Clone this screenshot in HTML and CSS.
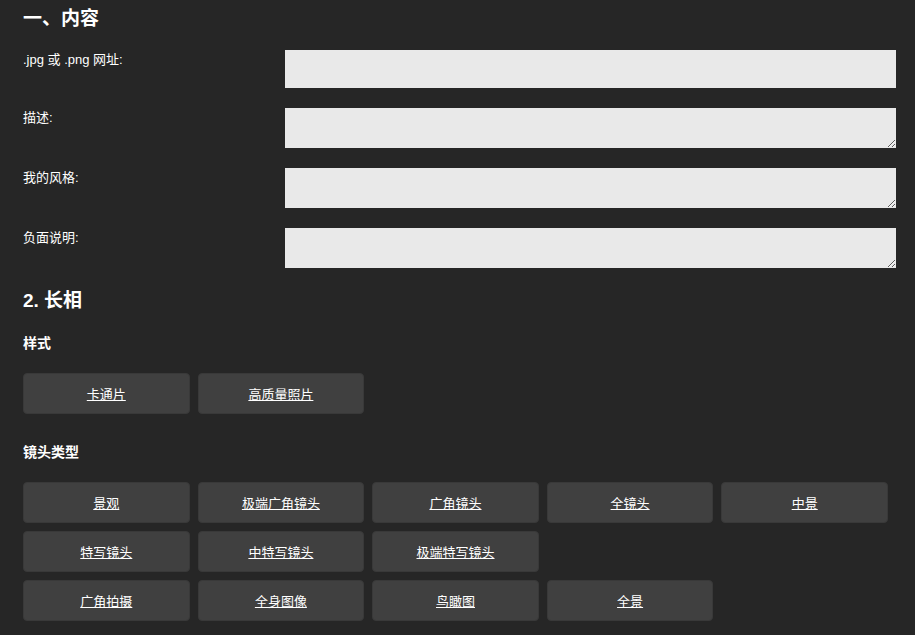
FILE: index.html
```html
<!DOCTYPE html>
<html lang="zh-CN">
<head>
<meta charset="utf-8">
<title>内容</title>
<link rel="stylesheet" href="styles.css">
</head>
<body>
<div class="page">
  <h2 class="section-title first">一、内容</h2>
  <div class="field">
    <label class="field-label">.jpg 或 .png 网址:</label>
    <input class="field-input" type="text">
  </div>
  <div class="field">
    <label class="field-label">描述:</label>
    <textarea class="field-area"></textarea>
  </div>
  <div class="field">
    <label class="field-label">我的风格:</label>
    <textarea class="field-area"></textarea>
  </div>
  <div class="field">
    <label class="field-label">负面说明:</label>
    <textarea class="field-area"></textarea>
  </div>

  <h2 class="section-title">2. 长相</h2>
  <h3 class="group-title">样式</h3>
  <div class="options">
    <div class="option-row">
      <a class="option" href="#">卡通片</a>
      <a class="option" href="#">高质量照片</a>
    </div>
  </div>
  <h3 class="group-title spaced">镜头类型</h3>
  <div class="options">
    <div class="option-row">
      <a class="option" href="#">景观</a>
      <a class="option" href="#">极端广角镜头</a>
      <a class="option" href="#">广角镜头</a>
      <a class="option" href="#">全镜头</a>
      <a class="option" href="#">中景</a>
    </div>
    <div class="option-row">
      <a class="option" href="#">特写镜头</a>
      <a class="option" href="#">中特写镜头</a>
      <a class="option" href="#">极端特写镜头</a>
    </div>
    <div class="option-row">
      <a class="option" href="#">广角拍摄</a>
      <a class="option" href="#">全身图像</a>
      <a class="option" href="#">鸟瞰图</a>
      <a class="option" href="#">全景</a>
    </div>
  </div>
</div>
</body>
</html>
```

FILE: styles.css
```css
html, body {
  margin: 0;
  padding: 0;
  background: #262626;
  color: #ffffff;
  font-family: "Liberation Sans", "Noto Sans CJK SC", sans-serif;
}

.page {
  width: 873px;
  padding: 7px 0 0 23px;
}

.section-title {
  margin: 21px 0 0;
  font-size: 19px;
  line-height: 24px;
  font-weight: bold;
}

.section-title.first {
  margin: 0 0 19px;
}

.field {
  display: flex;
  align-items: flex-start;
  margin-bottom: 20px;
}

.field-label {
  flex: 0 0 262px;
  font-size: 13px;
  line-height: 20px;
}

.field-input,
.field-area {
  flex: 1;
  box-sizing: border-box;
  margin: 0;
  border: none;
  outline: none;
  background: #e9e9e9;
  font-family: inherit;
  font-size: 13px;
  border-radius: 0;
}

.field-input {
  height: 38px;
}

.field-area {
  height: 40px;
  resize: vertical;
}

.group-title {
  margin: 20px 0 19px;
  font-size: 14px;
  line-height: 21px;
  font-weight: bold;
}

.group-title.spaced {
  margin-top: 28px;
}

.options {
  display: flex;
  flex-direction: column;
  gap: 8px;
}

.option-row {
  display: grid;
  grid-template-columns: repeat(5, 1fr);
  column-gap: 8px;
  padding-right: 8px;
}

.option {
  box-sizing: border-box;
  height: 41px;
  display: flex;
  align-items: center;
  justify-content: center;
  background: #404040;
  border: 1px solid #393939;
  border-radius: 4px;
  color: #ffffff;
  font-size: 13px;
  text-decoration: underline;
}
```
